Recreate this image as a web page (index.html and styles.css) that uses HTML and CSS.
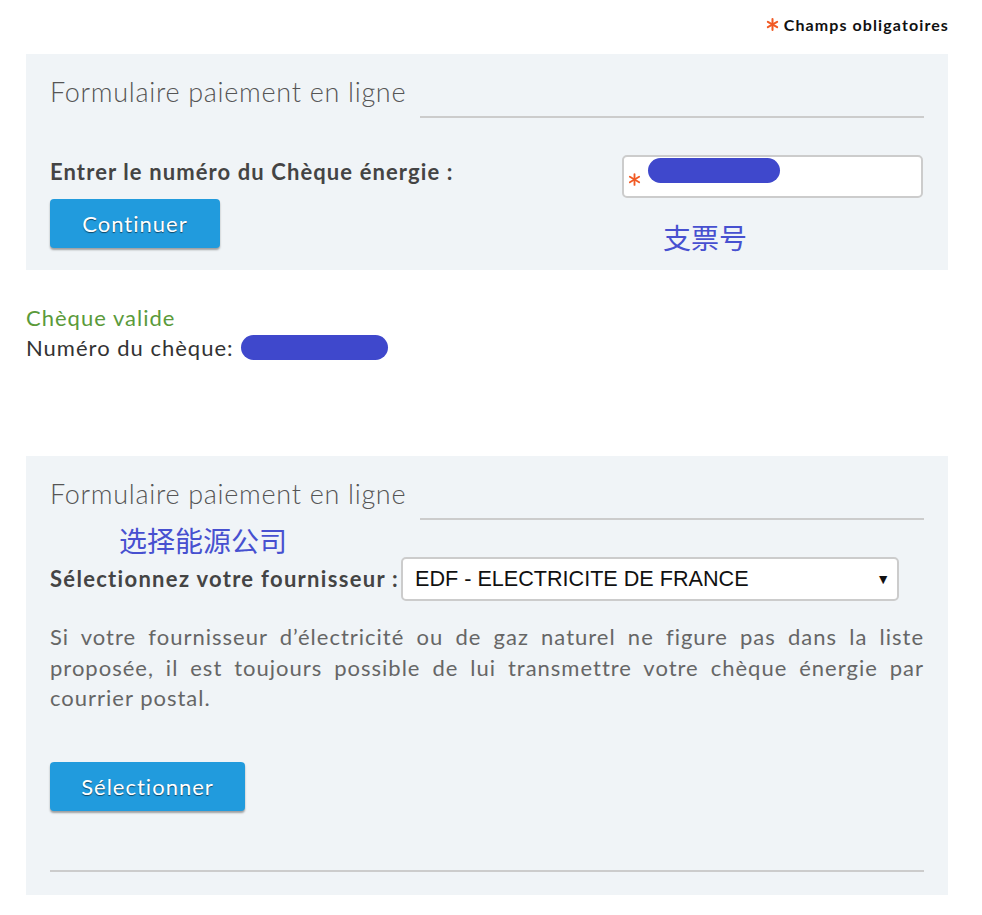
FILE: index.html
```html
<!DOCTYPE html>
<html lang="fr">
<head>
<meta charset="utf-8">
<title>Formulaire paiement en ligne</title>
<link rel="stylesheet" href="styles.css">
</head>
<body>
<div class="page">
  <div class="required-note">
    <svg class="asterisk" viewBox="0 0 14 14" aria-hidden="true"><g stroke="#f15a24" stroke-width="2.2" stroke-linecap="round"><line x1="7" y1="1.2" x2="7" y2="12.8"/><line x1="2" y1="4.1" x2="12" y2="9.9"/><line x1="2" y1="9.9" x2="12" y2="4.1"/></g></svg>
    <span>Champs obligatoires</span>
  </div>

  <section class="panel panel-one">
    <div class="panel-head">
      <h2 class="panel-title">Formulaire paiement en ligne</h2>
      <span class="head-rule"></span>
    </div>
    <div class="cheque-row">
      <div class="cheque-left">
        <label class="field-label">Entrer le numéro du Chèque énergie :</label>
        <button class="btn btn-continue">Continuer</button>
      </div>
      <div class="cheque-right">
        <div class="text-input">
          <svg class="asterisk input-star" viewBox="0 0 14 14" aria-hidden="true"><g stroke="#f15a24" stroke-width="2" stroke-linecap="round"><line x1="7" y1="1.2" x2="7" y2="12.8"/><line x1="2" y1="4.1" x2="12" y2="9.9"/><line x1="2" y1="9.9" x2="12" y2="4.1"/></g></svg>
          <span class="redact redact-input"></span>
        </div>
        <div class="note-cn note-cheque">支票号</div>
      </div>
    </div>
  </section>

  <div class="status">
    <div class="status-ok">Chèque valide</div>
    <div class="status-num">Numéro du chèque: <span class="redact redact-num"></span></div>
  </div>

  <section class="panel panel-two">
    <div class="panel-head">
      <h2 class="panel-title">Formulaire paiement en ligne</h2>
      <span class="head-rule"></span>
    </div>
    <div class="note-cn note-supplier">选择能源公司</div>
    <div class="supplier-row">
      <label class="field-label label-supplier">Sélectionnez votre fournisseur :</label>
      <div class="select-box">
        <span>EDF - ELECTRICITE DE FRANCE</span>
        <span class="select-arrow">▼</span>
      </div>
    </div>
    <p class="info"><span class="jline">Si votre fournisseur d’électricité ou de gaz naturel ne figure pas dans la liste</span> <span class="jline">proposée, il est toujours possible de lui transmettre votre chèque énergie par</span> <span class="lline">courrier postal.</span></p>
    <button class="btn btn-select">Sélectionner</button>
    <div class="bottom-rule"></div>
  </section>
</div>
</body>
</html>
```

FILE: styles.css
```css
* { box-sizing: border-box; }
html, body { margin: 0; padding: 0; background: #fff; }
body {
  font-family: Lato, "Open Sans", "Noto Sans CJK SC", sans-serif;
  color: #333;
}
.page {
  width: 922px;
  margin-left: 26px;
  padding-top: 12px;
}
.required-note {
  display: flex;
  justify-content: flex-end;
  align-items: center;
  gap: 5px;
  font-size: 16px;
  letter-spacing: 1.1px;
  font-weight: 700;
  color: #111;
  height: 24px;
  margin-right: -1px;
}
.asterisk { display: block; width: 13px; height: 13px; }

.panel {
  background: #f0f4f7;
  padding: 0 24px;
}
.panel-one { margin-top: 18px; height: 216px; padding-top: 22px; }
.panel-head {
  display: flex;
  align-items: flex-start;
}
.panel-title {
  margin: 0;
  font-weight: 300;
  font-size: 27px;
  letter-spacing: 0.7px;
  color: #555;
  line-height: 32px;
  width: 370px;
  flex: none;
  white-space: nowrap;
}
.head-rule {
  flex: 1;
  height: 2px;
  background: #ccc;
  margin-top: 40px;
}
.cheque-row {
  display: flex;
  justify-content: space-between;
}
.cheque-left { padding-top: 41px; }
.field-label {
  display: block;
  font-size: 22px;
  letter-spacing: 1.1px;
  font-weight: 700;
  color: #444;
  line-height: 26px;
  white-space: nowrap;
}
.label-supplier { letter-spacing: 1.3px; }
.btn {
  display: block;
  background: #219bdd;
  color: #fff;
  border: none;
  border-radius: 4px;
  font-family: Lato, sans-serif;
  font-size: 22px;
  letter-spacing: 1px;
  text-shadow: 0 1px 1px rgba(0,0,0,.55);
  box-shadow: 0 2px 2px rgba(0,0,0,.35);
  padding: 0;
  cursor: pointer;
}
.btn-continue { width: 170px; height: 49px; margin-top: 14px; }
.cheque-right { width: 301px; margin-right: 1px; padding-top: 37px; }
.text-input {
  height: 43px;
  background: #fff;
  border: 2px solid #ccc;
  border-radius: 5px;
  position: relative;
}
.input-star {
  position: absolute;
  left: 4px;
  top: 16px;
}
.redact {
  display: inline-block;
  background: #3f48cc;
  border-radius: 13px;
}
.redact-input {
  position: absolute;
  left: 24px;
  top: 1px;
  width: 132px;
  height: 25px;
}
.note-cn {
  color: #4750d0;
  font-family: "Noto Sans CJK SC", sans-serif;
  font-size: 28px;
  line-height: 36px;
}
.note-cheque { margin-top: 21px; padding-left: 41px; }

.status { margin-top: 33px; font-size: 22px; letter-spacing: 1px; line-height: 30px; }
.status-ok { color: #5a9a3a; }
.status-num { color: #333; display: flex; align-items: center; }
.redact-num { width: 147px; height: 25px; margin-left: 7px; margin-top: -2px; }

.panel-two { margin-top: 93px; padding-top: 22px; padding-bottom: 23px; }
.note-supplier { margin-top: 3px; padding-left: 69px; font-size: 28px; line-height: 34px; }
.supplier-row {
  display: flex;
  align-items: center;
}
.select-box {
  width: 498px;
  height: 44px;
  margin-left: auto;
  margin-right: 25px;
  background: #fff;
  border: 2px solid #ccc;
  border-radius: 5px;
  display: flex;
  justify-content: space-between;
  align-items: center;
  padding: 0 7px 0 12px;
  font-family: "Liberation Sans", Arial, sans-serif;
  font-size: 21.6px;
  color: #111;
}
.select-arrow { font-size: 14px; }
.info {
  margin: 21px 0 0;
  font-size: 22px;
  letter-spacing: 1px;
  line-height: 30.5px;
  color: #666;
}
.jline { display: block; text-align: justify; text-align-last: justify; }
.lline { display: block; }
.btn-select { width: 195px; height: 49px; margin-top: 48px; }
.bottom-rule { height: 2px; background: #ccc; margin-top: 59px; }
```
